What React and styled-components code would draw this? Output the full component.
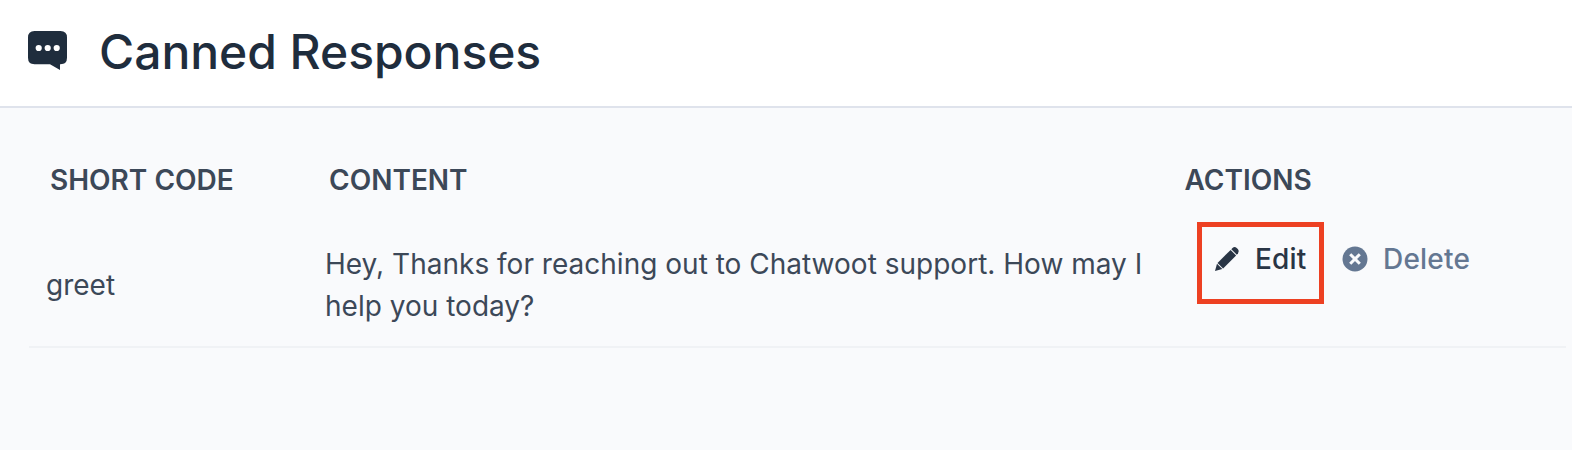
import React from 'react';
import styled, { createGlobalStyle } from 'styled-components';

const Global = createGlobalStyle`
  * { box-sizing: border-box; }
  body { margin: 0; background: #f9fafc; font-family: Inter, sans-serif; color: #3c4858; }
`;
const Page = styled.main`
  min-height: 450px;
  background: #f9fafc;
`;
const Header = styled.header`
  display: flex;
  align-items: center;
  height: 108px;
  padding: 0 28px 4px;
  gap: 32px;
  background: #fff;
  border-bottom: 2px solid #dfe3ec;
`;
const Title = styled.h1`
  margin: 0;
  padding-top: 2px;
  font-size: 48px;
  line-height: 60px;
  font-weight: 500;
  letter-spacing: -0.04px;
  color: #1f2d3d;
  white-space: nowrap;
`;
const Table = styled.section`
  padding: 48px 6px 0 29px;
`;
const Row = styled.div`
  display: grid;
  grid-template-columns: 279px 855.5px 1fr;
`;
const HeadRow = styled(Row)`
  padding-left: 21px;
  font-size: 28px;
  line-height: 48px;
  font-weight: 600;
`;
const BodyRow = styled(Row)`
  height: 144px;
  padding-left: 17px;
  font-size: 28px;
  line-height: 42px;
  border-bottom: 2px solid #f0f2f5;
`;
const Cell = styled.div`
  align-self: center;
  padding-top: 20px;
  letter-spacing: 0.01px;
`;
const Actions = styled.div`
  display: flex;
  align-items: flex-start;
  padding: 18px 0 0 16.5px;
`;
const Button = styled.button`
  display: flex;
  align-items: center;
  gap: 15px;
  width: ${p => (p.$marked ? '127px' : 'auto')};
  height: 82px;
  padding: ${p => (p.$marked ? '0 0 8px 12px' : '0 0 8px 18px')};
  border: ${p => (p.$marked ? '5px solid #ed4022' : '0')};
  background: none;
  color: ${p => (p.$marked ? '#293545' : '#647792')};
  font: 500 28px/40px Inter, sans-serif;
  letter-spacing: 0.2px;
  white-space: nowrap;
`;
const Glyph = styled.svg`
  flex: none;
  display: block;
`;

const ChatIcon = () => (
  <Glyph width="39" height="40" viewBox="0 0 39 40">
    <path fill="#1f2d3d" d="M6.5 0h26Q39 0 39 6.5v20.3q0 6.5-6.500 6.500H32V39l-10-5.700H6.500Q0 33.300 0 26.800V6.500Q0 0 6.500 0z" />
    <g fill="#fff">
      <circle cx="10.700" cy="17" r="3.100" />
      <circle cx="19.700" cy="17" r="3.100" />
      <circle cx="28.700" cy="17" r="3.100" />
    </g>
  </Glyph>
);
const PencilIcon = () => (
  <Glyph width="26" height="26" viewBox="0 0 26 26" fill="currentColor">
    <path d="M1 25l2-7.300 5.300 5.300z" />
    <path d="M3.500 16.900L16.600 3.900l5.500 5.500L9.100 22.500z" />
    <path d="M17.300 3.200l1.200-1.200q2.100-1.800 4.200 0l1.300 1.300q1.800 2.100 0 4.200L22.800 8.700z" />
  </Glyph>
);
const CloseIcon = () => (
  <Glyph width="26" height="26" viewBox="0 0 26 26">
    <circle cx="13" cy="13" r="12.500" fill="currentColor" />
    <path d="M8.200 8.200l9.600 9.600M17.800 8.200L8.200 17.800" stroke="#f9fafc" strokeWidth="3" />
  </Glyph>
);

export default function App() {
  return (
    <Page>
      <Global />
      <Header>
        <ChatIcon />
        <Title>Canned Responses</Title>
      </Header>
      <Table>
        <HeadRow><div>SHORT CODE</div><div>CONTENT</div><div>ACTIONS</div></HeadRow>
        <BodyRow>
          <Cell>greet</Cell>
          <Cell>Hey, Thanks for reaching out to Chatwoot support. How may I help you today?</Cell>
          <Actions>
            <Button $marked><PencilIcon />Edit</Button>
            <Button><CloseIcon />Delete</Button>
          </Actions>
        </BodyRow>
      </Table>
    </Page>
  );
}
